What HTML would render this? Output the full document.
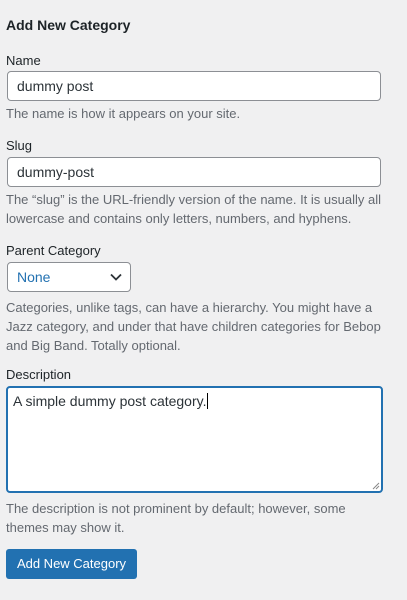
<!DOCTYPE html>
<html><head><style>
body{margin:0;width:407px;height:600px;background:#f0f0f1;font-family:"Liberation Sans",sans-serif;color:#3c434a;font-size:13px;position:relative;overflow:hidden}
.a{position:absolute;left:6px;white-space:nowrap}
h2{position:absolute;left:6px;top:17px;margin:0;font-size:14px;font-weight:bold;color:#1d2327}
.lab{color:#1d2327;font-size:13px;line-height:18px}
.help{color:#646970;font-size:13px;line-height:19px}
.inp{position:absolute;left:7px;width:374px;height:28px;background:#fff;border:1px solid #8c8f94;border-radius:4px;box-sizing:border-box;font-size:14px;color:#2c3338;padding-left:9px;line-height:26px}
</style></head><body>
<h2>Add New Category</h2>
<div class="a lab" style="top:52px">Name</div>
<div class="inp" style="top:71px;height:30px;line-height:28px">dummy post</div>
<div class="a help" style="top:104px">The name is how it appears on your site.</div>
<div class="a lab" style="top:137px">Slug</div>
<div class="inp" style="top:157px;height:30px;line-height:28px">dummy-post</div>
<div class="a help" style="top:190px">The “slug” is the URL-friendly version of the name. It is usually all<br>lowercase and contains only letters, numbers, and hyphens.</div>
<div class="a lab" style="top:242px">Parent Category</div>
<div class="inp" style="top:262px;width:124px;height:30px;line-height:28px;color:#2271b1">None
<svg style="position:absolute;right:8px;top:10px" width="12" height="8" viewBox="0 0 12 8"><path d="M1 1.5L6 6.5L11 1.5" stroke="#2c3338" stroke-width="1.8" fill="none"/></svg></div>
<div class="a help" style="top:298px">Categories, unlike tags, can have a hierarchy. You might have a<br>Jazz category, and under that have children categories for Bebop<br>and Big Band. Totally optional.</div>
<div class="a lab" style="top:366px">Description</div>
<div style="position:absolute;left:6px;top:386px;width:377px;height:107px;box-sizing:border-box;border:2px solid #2271b1;border-radius:4px;background:#fff;font-size:14px;color:#2c3338;padding:3px 5px;line-height:20px">A simple dummy post category.<span style="border-left:1px solid #000;margin-left:1px"></span>
<svg style="position:absolute;right:1px;bottom:1px" width="8" height="8"><path d="M7 1L1 7M7 4L4 7" stroke="#888" stroke-width="1"/></svg></div>
<div class="a help" style="top:499px">The description is not prominent by default; however, some<br>themes may show it.</div>
<div style="position:absolute;left:6px;top:549px;width:131px;height:30px;background:#2271b1;border-radius:3px;color:#fff;font-size:13px;text-align:center;line-height:30px">Add New Category</div>
</body></html>
